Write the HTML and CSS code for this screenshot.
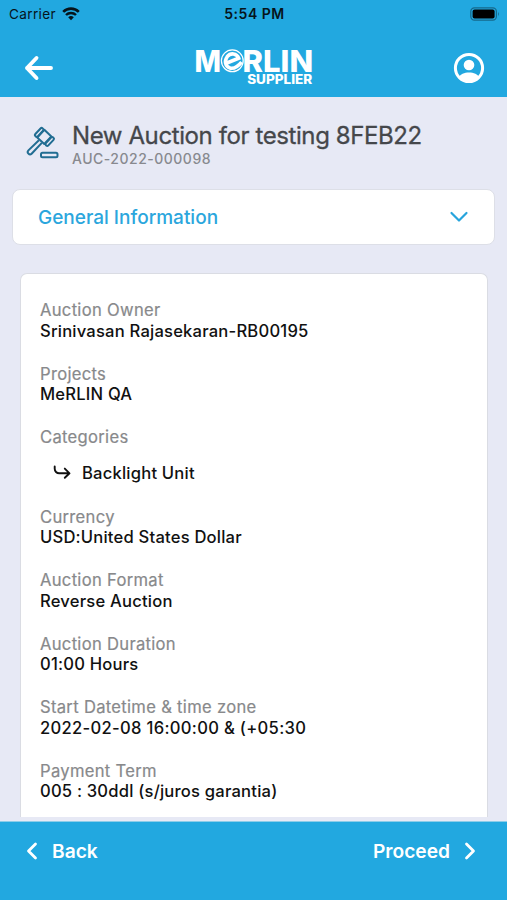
FILE: index.html
```html
<!DOCTYPE html>
<html lang="en">
<head>
<meta charset="utf-8">
<title>MeRLIN Supplier</title>
<link rel="stylesheet" href="styles.css">
</head>
<body>
<div class="app">
  <header class="header">
    <div class="status">
      <div class="carrier">
        <span>Carrier</span>
        <svg width="18" height="14" viewBox="0 0 18 14" fill="none" stroke="#06141b"><path d="M1.2 4.9a11 11 0 0 1 15.6 0" stroke-width="2.6"/><path d="M4 8a7.1 7.1 0 0 1 10 0" stroke-width="2.4"/><path d="M9 13.2 6.2 10.3a4 4 0 0 1 5.6 0z" fill="#06141b" stroke="none"/></svg>
      </div>
      <span class="time">5:54 PM</span>
      <svg class="battery" width="30" height="14" viewBox="0 0 30 14"><rect x=".8" y=".8" width="25.6" height="12.4" rx="3.6" fill="none" stroke="#16688b" stroke-width="1.2"/><rect x="2.6" y="2.6" width="22" height="8.8" rx="2" fill="#000"/><path d="M28 4.8q1.8 2.2 0 4.4z" fill="#16688b"/></svg>
    </div>
    <nav class="nav">
      <svg width="30" height="26" viewBox="0 0 30 26" fill="none" stroke="#fff" stroke-width="3.9" stroke-linecap="round" stroke-linejoin="round"><path d="M13.500 3 4 13l9.500 10M4 13H28"/></svg>
      <svg class="logo" width="120" height="54" viewBox="0 -8 120 54" fill="#fff">
        <text class="logo-main" x="0.500" y="25.500" textLength="26.500" lengthAdjust="spacingAndGlyphs">M</text>
        <circle cx="38.300" cy="14.800" r="10.900" fill="none" stroke="#fff" stroke-width="1.200"/>
        <path d="M31.600 17.500 44.700 12.200C42.800 7.100 36.500 6.500 33.200 10.700C30.100 14.900 31.300 20.800 35.900 22C39.500 22.900 43.600 21 47.600 16.100" fill="none" stroke="#fff" stroke-width="3.600"/>
        <text class="logo-main" x="48.600" y="25.500" textLength="70.500" lengthAdjust="spacingAndGlyphs">RLIN</text>
        <text class="logo-sub" x="53.200" y="38.300" textLength="65" lengthAdjust="spacingAndGlyphs">SUPPLIER</text>
      </svg>
      <svg width="32" height="32" viewBox="0 0 32 32"><circle cx="16" cy="16" r="13.600" fill="none" stroke="#fff" stroke-width="3"/><circle cx="16" cy="13" r="5.300" fill="#fff"/><path d="M6 25.500C7.800 18.700 24.200 18.700 26 25.500A14 14 0 0 1 6 25.500z" fill="#fff"/></svg>
    </nav>
  </header>
  <main class="main">
    <section class="heading">
      <svg width="34" height="36" viewBox="0 0 34 36" fill="none" stroke="#216d92" stroke-width="2" stroke-linejoin="round"><rect x="-4.800" y="-5.200" width="9.600" height="10.400" transform="translate(18.300 10.900) rotate(43)"/><rect x="-1.700" y="-5.300" width="3.400" height="10.600" rx="1.500" transform="translate(13.200 6.400) rotate(43)"/><rect x="-1.700" y="-5.300" width="3.400" height="10.600" rx="1.500" transform="translate(23.700 15.500) rotate(43)"/><path d="m12.900 14.200-10.500 10.200a2.300 2.300 0 0 0 3.200 3.300l10.200-10.800"/><rect x="15" y="26.800" width="16.500" height="4.500" rx="1.500"/></svg>
      <div class="titles">
        <h1>New Auction for testing 8FEB22</h1>
        <p>AUC-2022-000098</p>
      </div>
    </section>
    <div class="accordion">
      <span>General Information</span>
      <svg width="20" height="12" viewBox="0 0 20 12" fill="none" stroke="#27a4dc" stroke-width="2.200" stroke-linecap="round" stroke-linejoin="round"><path d="m2.500 2 7.500 7.500L17.500 2"/></svg>
    </div>
    <dl class="card">
      <div class="field"><dt>Auction Owner</dt><dd>Srinivasan Rajasekaran-RB00195</dd></div>
      <div class="field"><dt>Projects</dt><dd>MeRLIN QA</dd></div>
      <div class="field"><dt>Categories</dt><dd class="category"><svg width="18" height="16" viewBox="0 0 18 16" fill="none" stroke="#111" stroke-width="1.900" stroke-linecap="round" stroke-linejoin="round"><path d="M1.700 1.500v2.300a4.500 4.500 0 0 0 4.500 4.500h10M11.800 3.600l4.700 4.700-4.700 4.500"/></svg><span>Backlight Unit</span></dd></div>
      <div class="field"><dt>Currency</dt><dd>USD:United States Dollar</dd></div>
      <div class="field"><dt>Auction Format</dt><dd>Reverse Auction</dd></div>
      <div class="field"><dt>Auction Duration</dt><dd>01:00 Hours</dd></div>
      <div class="field"><dt>Start Datetime &amp; time zone</dt><dd class="date">2022-02-08 16:00:00 &amp; (+05:30</dd></div>
      <div class="field"><dt>Payment Term</dt><dd>005 : 30ddl (s/juros garantia)</dd></div>
    </dl>
  </main>
  <footer class="footer">
    <div class="action"><svg width="12" height="18" viewBox="0 0 12 18" fill="none" stroke="#fff" stroke-width="2.800" stroke-linecap="round" stroke-linejoin="round"><path d="M9.500 2 2.500 9l7 7"/></svg><span>Back</span></div>
    <div class="action"><span>Proceed</span><svg width="12" height="18" viewBox="0 0 12 18" fill="none" stroke="#fff" stroke-width="2.800" stroke-linecap="round" stroke-linejoin="round"><path d="m2.500 2 7 7-7 7"/></svg></div>
  </footer>
</div>
</body>
</html>
```
FILE: styles.css
```css
* { box-sizing: border-box; }
body { margin: 0; font-family: Inter, "Liberation Sans", sans-serif; }
svg { display: block; flex: none; }
h1, p, dl, dt, dd { margin: 0; }
.app { width: 507px; height: 900px; display: flex; flex-direction: column; overflow: hidden; background: #e7e9f5; }
.header { height: 97px; flex: none; background: #22a8e0; }
.status { height: 27px; padding: 0 7px 0 9px; display: grid; grid-template-columns: 1fr auto 1fr; align-items: center; color: #06141b; font-size: 13.6px; }
.carrier { display: flex; align-items: center; gap: 6px; letter-spacing: 0.35px; }
.time { font-size: 14px; font-weight: 600; letter-spacing: 0.5px; }
.battery { justify-self: end; }
.nav { height: 70px; padding: 0 22px 0 23px; display: grid; grid-template-columns: 1fr auto 1fr; align-items: center; }
.nav > :last-child { justify-self: end; margin-top: 12px; }
.nav > :first-child { margin-top: 12px; }
.logo { margin-top: 6px; }
.logo-main { font-size: 30px; font-weight: 800; }
.logo-sub { font-size: 12.5px; font-weight: 800; }
.main { flex: 1; min-height: 0; padding: 25px 12px 0; display: flex; flex-direction: column; }
.heading { height: 67px; padding-left: 14px; display: flex; gap: 12px; }
.heading svg { margin-top: 4px; }
.heading h1 { font-size: 24px; line-height: 28px; font-weight: 400; letter-spacing: -0.4px; color: #45474b; white-space: nowrap; -webkit-text-stroke: 0.3px #45474b; }
.heading p { font-size: 14px; line-height: 18px; font-weight: 500; color: #88898f; letter-spacing: 0.5px; }
.accordion { height: 56px; flex: none; padding: 0 25px; display: flex; align-items: center; justify-content: space-between; background: #fff; border: 1px solid #dddfe7; border-radius: 8px; color: #2ba6dd; font-size: 19px; font-weight: 500; }
.card { flex: 1; margin: 28px 7px 4px 8px; padding: 26px 19px 0; display: flex; flex-direction: column; gap: 22.5px; background: #fff; border: 1px solid #dadce3; border-bottom: 0; border-radius: 7px 7px 0 0; font-size: 16.6px; line-height: 20.5px; letter-spacing: 0.2px; white-space: nowrap; }
.field dt { color: #88898b; letter-spacing: 0.3px; -webkit-text-stroke: 0.2px #88898b; }
.field dd { color: #111; font-weight: 500; }
.field .date { letter-spacing: 0.3px; }
.field .category { display: flex; align-items: center; gap: 11px; padding: 15px 0 1px 13px; }
.footer { height: 79px; flex: none; padding: 20px 31px 0 26px; display: flex; justify-content: space-between; background: #22a8e0; border-top: 1px solid #8dcde9; color: #fff; font-size: 19.2px; font-weight: 600; }
.action { height: 18px; display: flex; align-items: center; gap: 14px; }
```
